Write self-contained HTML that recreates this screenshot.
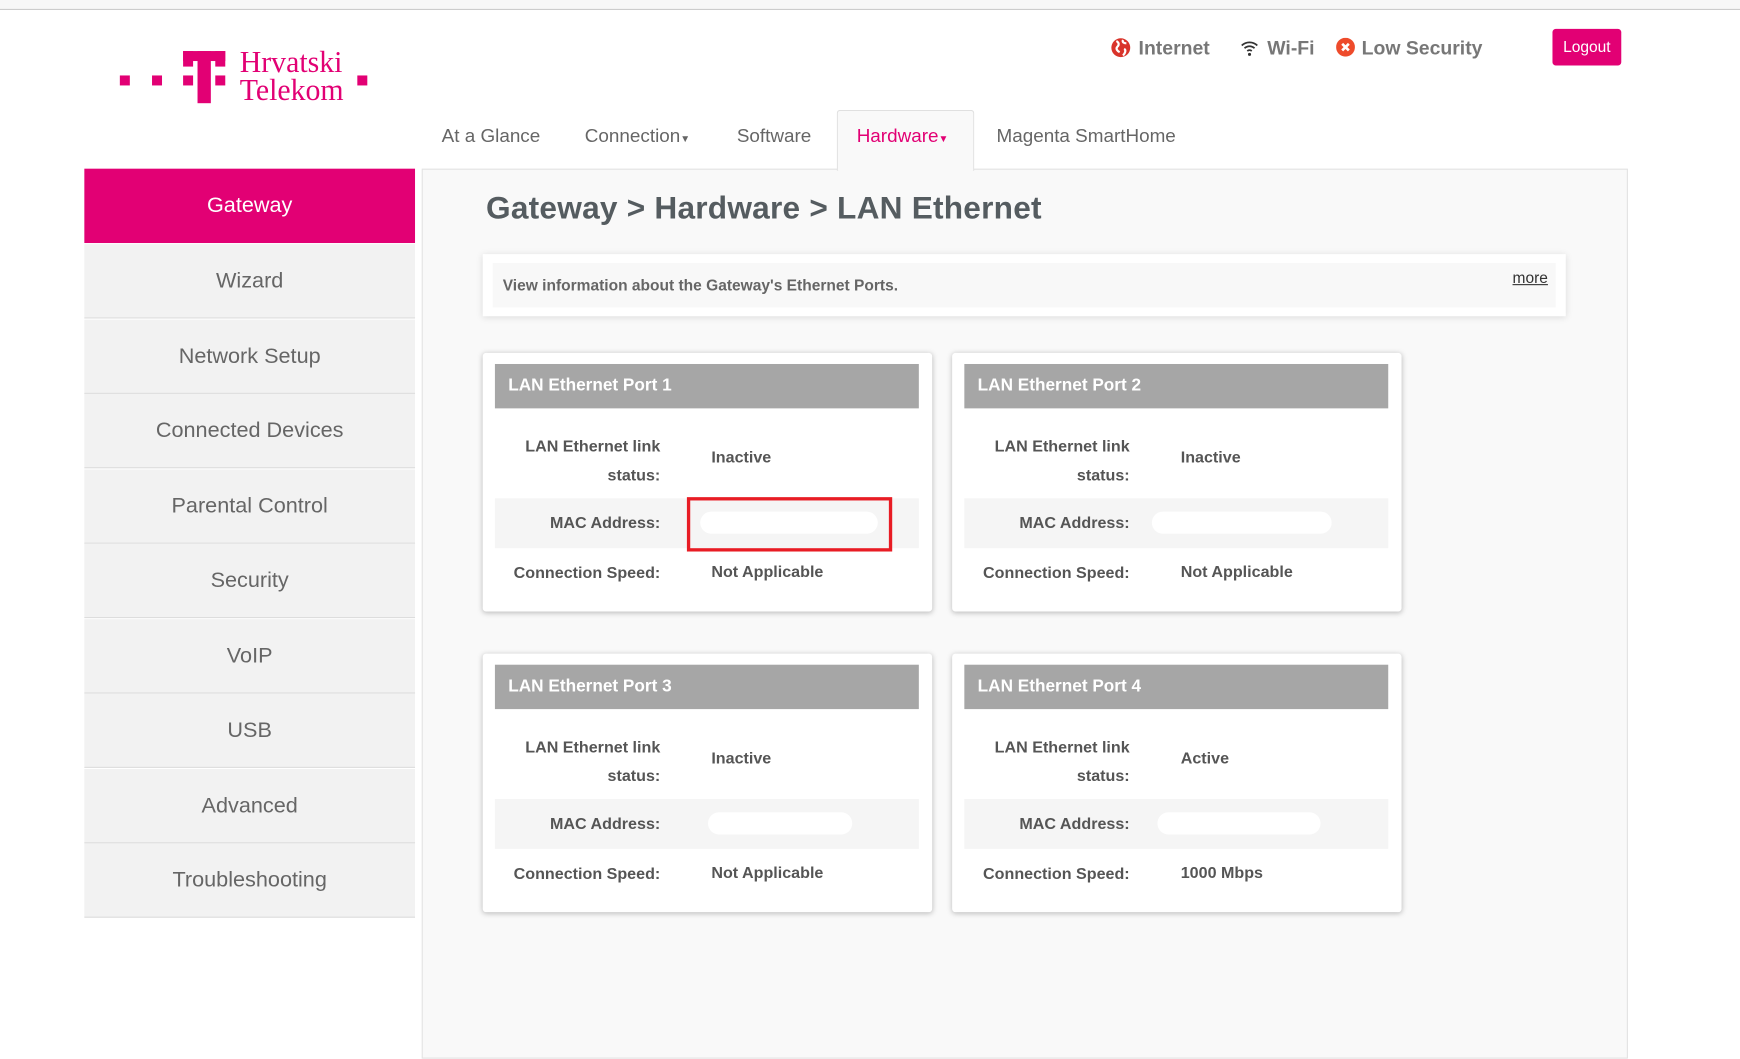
<!DOCTYPE html>
<html><head><meta charset="utf-8"><style>
html,body{margin:0;padding:0;width:1740px;height:1042px;overflow:hidden;background:#fff;font-family:"Liberation Sans",Arial,sans-serif}
#w{position:absolute;left:0;top:0;width:1568px;height:939px;transform:scale(1.1097);transform-origin:0 0}
.a{position:absolute}
.topline{left:0;top:0;width:1568px;height:8px;background:#f7f7f7;border-bottom:1px solid #ccc}
.dot{background:#e20074;width:9px;height:9px}
.logo{font-family:"Liberation Serif",serif;color:#e20074;font-size:28px;line-height:25px;transform:scaleX(.96);transform-origin:0 0}
.st{font-weight:bold;color:#777;font-size:17.5px;top:33px}
.tab{top:113px;font-size:17px;color:#666}
.side{left:76px;width:298px;height:66px;background:#f2f2f2;border-bottom:1px solid #ddd;text-align:center;line-height:66px;font-size:19.5px;color:#666}
.card{background:#fff;width:405px;height:233px;border-radius:3px;box-shadow:0 1px 5px rgba(0,0,0,.25)}
.hd{position:absolute;left:11px;top:10px;width:382px;height:40px;background:#a6a6a6;color:#fff;font-weight:bold;font-size:15.5px;line-height:40px;text-indent:12px}
.lb{position:absolute;right:245px;text-align:right;font-weight:bold;font-size:14.5px;color:#555}
.vl{position:absolute;left:206px;font-weight:bold;font-size:14.5px;color:#555}
.mac{position:absolute;left:11px;top:131px;width:382px;height:45px;background:#f5f5f5}
.blob{position:absolute;background:#fff;border-radius:10px;height:20px;top:143px}
</style></head><body><div id="w">
<div class="a topline"></div>
<div class="a dot" style="left:108px;top:68px"></div>
<div class="a dot" style="left:137px;top:68px"></div>
<div class="a dot" style="left:322px;top:68px"></div>
<div class="a" style="left:165px;top:46px;width:38px;height:9px;background:#e20074"></div>
<div class="a" style="left:178px;top:46px;width:12px;height:47px;background:#e20074"></div>
<div class="a" style="left:165px;top:46px;width:9px;height:14px;background:#e20074"></div>
<div class="a" style="left:194px;top:46px;width:9px;height:14px;background:#e20074"></div>
<div class="a dot" style="left:165px;top:68px"></div>
<div class="a dot" style="left:194px;top:68px"></div>
<div class="a logo" style="left:216px;top:44px">Hrvatski<br>Telekom</div>

<svg class="a" style="left:1001px;top:34px" width="18" height="18" viewBox="0 0 18 18"><circle cx="9" cy="9" r="8.5" fill="#d9342b"/><path d="M5 3c2 1 3 3 1 5s0 4 2 5M11 2c-1 2 1 3 3 3M12 10c2 1 1 4-1 6" stroke="#fff" stroke-width="2" fill="none"/></svg>
<div class="a st" style="left:1026px">Internet</div>
<svg class="a" style="left:1117px;top:34px" width="18" height="18" viewBox="0 0 18 18"><path d="M2 7a10 10 0 0 1 14 0M4.5 9.5a6.5 6.5 0 0 1 9 0M7 12a3 3 0 0 1 4 0" stroke="#333" stroke-width="1.6" fill="none"/><circle cx="9" cy="15" r="1.4" fill="#333"/></svg>
<div class="a st" style="left:1142px">Wi-Fi</div>
<svg class="a" style="left:1204px;top:34px" width="17" height="17" viewBox="0 0 17 17"><circle cx="8.5" cy="8.5" r="8.5" fill="#ee4b2b"/><path d="M5.5 5.5l6 6M11.5 5.5l-6 6" stroke="#fff" stroke-width="2.4"/></svg>
<div class="a st" style="left:1227px">Low Security</div>
<div class="a" style="left:1399px;top:26px;width:62px;height:33px;background:#e20074;border-radius:3px;color:#fff;font-size:14px;text-align:center;line-height:33px">Logout</div>

<div class="a" style="left:380px;top:152px;width:1085px;height:800px;background:#f9f9f9;border:1px solid #e3e3e3"></div>
<div class="a" style="left:754px;top:99px;width:122px;height:54px;background:#f9f9f9;border:1px solid #e0e0e0;border-bottom:none;border-radius:3px 3px 0 0"></div>
<div class="a tab" style="left:398px">At a Glance</div>
<div class="a tab" style="left:527px">Connection<span style="font-size:9px">▼</span></div>
<div class="a tab" style="left:664px">Software</div>
<div class="a tab" style="left:772px;color:#e20074">Hardware<span style="font-size:9px">▼</span></div>
<div class="a tab" style="left:898px">Magenta SmartHome</div>

<div class="a side" style="top:152px;background:#e20074;color:#fff;border-bottom:none;height:67px;line-height:67px">Gateway</div>
<div class="a side" style="top:220px">Wizard</div>
<div class="a side" style="top:288px">Network Setup</div>
<div class="a side" style="top:355px">Connected Devices</div>
<div class="a side" style="top:423px">Parental Control</div>
<div class="a side" style="top:490px">Security</div>
<div class="a side" style="top:558px">VoIP</div>
<div class="a side" style="top:625px">USB</div>
<div class="a side" style="top:693px">Advanced</div>
<div class="a side" style="top:760px">Troubleshooting</div>

<div class="a" style="left:438px;top:172px;font-size:28.5px;font-weight:bold;color:#555c60;letter-spacing:.2px">Gateway &gt; Hardware &gt; LAN Ethernet</div>
<div class="a" style="left:435px;top:229px;width:976px;height:56px;background:#fff;box-shadow:0 1px 6px rgba(0,0,0,.12)">
<div class="a" style="left:9px;top:8px;width:958px;height:40px;background:#f8f8f8"></div>
<div class="a" style="left:18px;top:20px;font-size:14px;font-weight:bold;color:#666">View information about the Gateway's Ethernet Ports.</div>
<div class="a" style="left:928px;top:13px;font-size:14px;color:#333;text-decoration:underline">more</div>
</div>

<div class="a card" style="left:435px;top:318px"><div class="hd">LAN Ethernet Port 1</div><div class="mac"></div>
<div class="lb" style="top:72px;line-height:26px">LAN Ethernet link<br>status:</div><div class="vl" style="top:87px">Inactive</div>
<div class="lb" style="top:146px">MAC Address:</div><div class="blob" style="left:196px;width:160px"></div>
<div class="lb" style="top:191px">Connection Speed:</div><div class="vl" style="top:190px">Not Applicable</div>
<div class="a" style="left:184px;top:130px;width:179px;height:43px;border:3px solid #e81c24"></div></div>

<div class="a card" style="left:858px;top:318px"><div class="hd">LAN Ethernet Port 2</div><div class="mac"></div>
<div class="lb" style="top:72px;line-height:26px">LAN Ethernet link<br>status:</div><div class="vl" style="top:87px">Inactive</div>
<div class="lb" style="top:146px">MAC Address:</div><div class="blob" style="left:180px;width:162px"></div>
<div class="lb" style="top:191px">Connection Speed:</div><div class="vl" style="top:190px">Not Applicable</div></div>

<div class="a card" style="left:435px;top:589px"><div class="hd">LAN Ethernet Port 3</div><div class="mac"></div>
<div class="lb" style="top:72px;line-height:26px">LAN Ethernet link<br>status:</div><div class="vl" style="top:87px">Inactive</div>
<div class="lb" style="top:146px">MAC Address:</div><div class="blob" style="left:203px;width:130px"></div>
<div class="lb" style="top:191px">Connection Speed:</div><div class="vl" style="top:190px">Not Applicable</div></div>

<div class="a card" style="left:858px;top:589px"><div class="hd">LAN Ethernet Port 4</div><div class="mac"></div>
<div class="lb" style="top:72px;line-height:26px">LAN Ethernet link<br>status:</div><div class="vl" style="top:87px">Active</div>
<div class="lb" style="top:146px">MAC Address:</div><div class="blob" style="left:185px;width:147px"></div>
<div class="lb" style="top:191px">Connection Speed:</div><div class="vl" style="top:190px">1000 Mbps</div></div>
</div></body></html>
